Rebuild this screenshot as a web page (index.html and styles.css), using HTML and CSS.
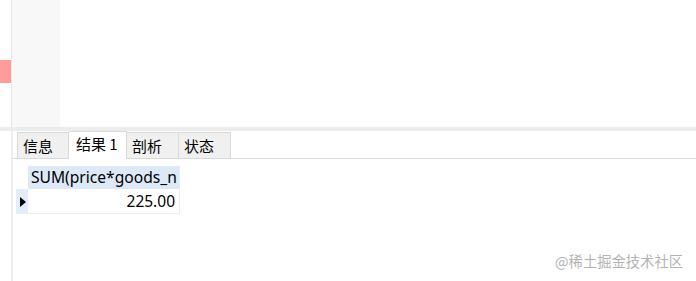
FILE: index.html
```html
<!DOCTYPE html>
<html lang="zh">
<head>
<meta charset="utf-8">
<link rel="stylesheet" href="styles.css">
</head>
<body>
<div class="app">
  <div class="top">
    <div class="marks"><div class="mark"></div></div>
    <div class="gutter"></div>
    <div class="editor"></div>
  </div>
  <div class="band"></div>
  <div class="bottom">
    <div class="side"></div>
    <div class="panel">
      <div class="tabs">
        <div class="tab">信息</div>
        <div class="tab active">结果 1</div>
        <div class="tab">剖析</div>
        <div class="tab">状态</div>
      </div>
      <div class="grid">
        <div class="corner"></div>
        <div class="head">SUM(price*goods_n</div>
        <div class="ind"><svg width="6" height="10" viewBox="0 0 6 10"><path d="M0 0 L6 5 L0 10 Z" fill="#000"/></svg></div>
        <div class="cell">225.00</div>
      </div>
      <div class="watermark">@稀土掘金技术社区</div>
    </div>
  </div>
</div>
</body>
</html>
```
FILE: styles.css
```css
html, body {
  margin: 0;
  padding: 0;
  background: #fff;
}
body {
  width: 696px;
  height: 281px;
  overflow: hidden;
  font-family: "Noto Sans", "Noto Sans CJK SC", sans-serif;
}
.app {
  display: flex;
  flex-direction: column;
  height: 281px;
}
.top {
  display: flex;
  height: 127px;
}
.marks {
  width: 11px;
  border-right: 1px solid #e6e6e6;
  background: #fff;
  padding-top: 60px;
  box-sizing: content-box;
}
.mark {
  width: 11px;
  height: 23px;
  background: #ff9b9b;
}
.gutter {
  width: 48px;
  background: #f8f8f8;
}
.editor {
  flex: 1;
  background: #fff;
}
.band {
  height: 4px;
  background: #ececec;
}
.bottom {
  flex: 1;
  display: flex;
}
.side {
  width: 11px;
  border-right: 2px solid #ececec;
}
.panel {
  flex: 1;
  position: relative;
}
.tabs {
  display: flex;
  align-items: flex-end;
  height: 27px;
  padding-left: 4px;
  border-bottom: 1px solid #d9d9d9;
}
.tab {
  box-sizing: border-box;
  width: 52px;
  height: 26px;
  padding-left: 5px;
  background: #f0f0f0;
  border: 1px solid #d9d9d9;
  border-bottom: none;
  border-left: none;
  font-family: "Noto Sans CJK SC", sans-serif;
  font-size: 15px;
  line-height: 26px;
  color: #000;
}
.tab:first-child {
  border-left: 1px solid #d9d9d9;
}
.tab.active {
  width: 58px;
  height: 28px;
  margin-bottom: -1px;
  padding-left: 7px;
  background: #fff;
  line-height: 24px;
}
.grid {
  display: grid;
  grid-template-columns: 12px 152px;
  grid-template-rows: 23px 25px;
  margin-top: 7px;
  margin-left: 3px;
}
.corner {
  background: #fff;
}
.head {
  background: #dde9f7;
  border-right: 1px solid #e8eef6;
  font-size: 15.6px;
  line-height: 23px;
  padding-left: 3px;
  white-space: nowrap;
  overflow: hidden;
  color: #000;
}
.ind {
  background: #e3eefa;
  display: flex;
  align-items: center;
  padding-left: 4px;
}
.cell {
  border-right: 1px solid #ececec;
  border-bottom: 1px solid #ececec;
  text-align: right;
  padding-right: 4px;
  font-size: 15.5px;
  line-height: 25px;
  color: #000;
}
.watermark {
  position: absolute;
  right: 13px;
  bottom: 10px;
  font-family: "Noto Sans CJK SC", sans-serif;
  font-size: 14.3px;
  color: #b3b3b3;
}
```
